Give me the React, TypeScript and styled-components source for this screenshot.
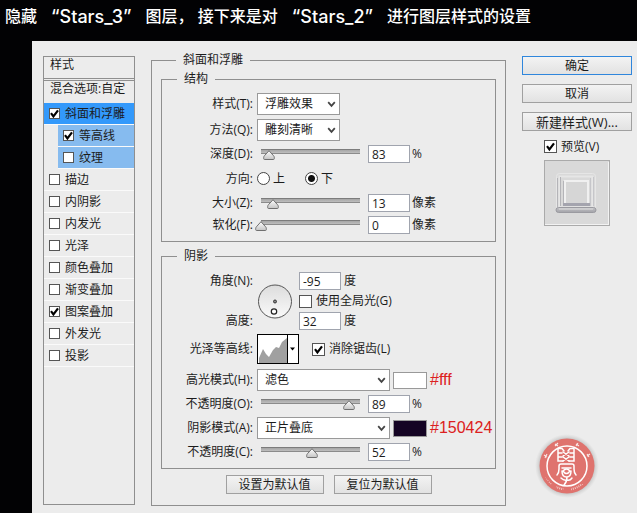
import React, { useId, useState } from "react";
import styled, { createGlobalStyle, css } from "styled-components";

const line = "#8f8f8f";
const face = "#ececec";

const svgUrl = (body: string, w: number, h: number) =>
  `url("data:image/svg+xml,${encodeURIComponent(
    `<svg xmlns='http://www.w3.org/2000/svg' width='${w}' height='${h}' viewBox='0 0 ${w} ${h}'>${body}</svg>`
  )}")`;

const tick = svgUrl(
  "<path d='M2 5.2 4.4 8.4 9 2.4' fill='none' stroke='#000' stroke-width='2.2'/>",
  11,
  11
);
const thumb = svgUrl(
  "<defs><linearGradient id='g' x2='0' y2='1'><stop stop-color='#fff'/><stop offset='1' stop-color='#c4c4c4'/></linearGradient></defs><path d='M6 .7 10.6 5.8Q11.3 6.6 11.3 7.4V8.6Q11.3 9.5 10.4 9.5H1.6Q.7 9.5 .7 8.6V7.4Q.7 6.6 1.4 5.8Z' fill='url(#g)' stroke='#707070'/>",
  12,
  10
);

const GlobalStyle = createGlobalStyle`
  *, *::before, *::after { box-sizing: border-box; }
  body {
    margin: 0;
    background: #020204;
    color: #1c1c1c;
    font: 12px/16px "Open Sans", "Noto Sans CJK SC", sans-serif;
  }
  input, select, button { font: inherit; color: inherit; margin: 0; }
`;

const Page = styled.div`
  display: flex;
  flex-direction: column;
  min-height: 100vh;
`;

const Title = styled.h1`
  display: flex;
  gap: 14px;
  margin: 0;
  padding: 4px 5px 12px;
  color: #fff;
  font: 500 16px/25px "Inter", "Noto Sans CJK SC", sans-serif;
  white-space: nowrap;
`;

const LayerName = styled.span`
  font-size: 18px;
`;

const Dialog = styled.form`
  flex: 1;
  display: grid;
  grid-template-columns: 92px minmax(0, 1fr) 110px;
  gap: 16px;
  margin-left: 32px;
  padding: 11px 5px 7px 11px;
  background: ${face};
`;

const StyleList = styled.nav`
  margin: 4px 0 1px;
  border: 1px solid ${line};
`;

const ListHead = styled.div`
  height: 22px;
  padding: 0 6px;
  border-bottom: 1px solid ${line};
  line-height: 15px;
`;

const ListBlend = styled.div`
  height: 23px;
  margin-top: 1px;
  padding: 0 6px;
  border-top: 1px solid ${line};
  line-height: 16px;
  white-space: nowrap;
`;

const ListItem = styled.label<{ $tone?: "active" | "child" }>`
  display: flex;
  align-items: center;
  gap: 5px;
  height: 22px;
  padding-left: 5px;
  border-bottom: 1px solid #fafafa;
  ${(p) => p.$tone === "active" && css`background: #3399fb;`}
  ${(p) =>
    p.$tone === "child" &&
    css`
      margin-left: 14px;
      background: #86bbef;
    `}
`;

const Tick = styled.input<{ $small?: boolean }>`
  appearance: none;
  flex: none;
  width: ${(p) => (p.$small ? 11 : 13)}px;
  height: ${(p) => (p.$small ? 11 : 13)}px;
  border: 1px solid #555;
  background: #fff center / 11px 11px no-repeat;
  &:checked { background-image: ${tick}; }
`;

const Group = styled.fieldset`
  min-width: 0;
  margin: 0;
  padding: 4px 0 5px;
  border: 1px solid ${line};
  & + & {
    margin-top: 6px;
    padding-top: 7px;
  }
`;

const Effect = styled(Group)`
  padding: 3px 9px 9px;
`;

const Legend = styled.legend`
  margin-left: 15px;
  padding: 0 7px;
  line-height: 16px;
`;

const Row = styled.div<{ $h: number }>`
  display: grid;
  grid-template-columns: 91px minmax(0, 1fr);
  column-gap: 4px;
  align-items: center;
  height: ${(p) => p.$h}px;
`;

const Caption = styled.label`
  text-align: right;
  white-space: nowrap;
`;

const Controls = styled.div<{ $gap?: number }>`
  display: flex;
  align-items: center;
  gap: ${(p) => p.$gap ?? 3}px;
  white-space: nowrap;
`;

const SelectBox = styled.span<{ $w: number }>`
  display: grid;
  align-items: center;
  width: ${(p) => p.$w}px;
  & > * { grid-area: 1 / 1; }
  & > svg {
    justify-self: end;
    margin-right: 4px;
    pointer-events: none;
  }
`;

const Select = styled.select`
  appearance: none;
  width: 100%;
  height: 22px;
  padding: 0 18px 0 7px;
  border: 1px solid #999;
  border-radius: 0;
  background: #fff;
`;

const NumberBox = styled.input`
  width: 42px;
  height: 18px;
  padding: 0 3px;
  border: 1px solid #a0a4ae;
  background: #fff;
`;

const Slider = styled.input`
  appearance: none;
  width: 111px;
  height: 12px;
  margin-left: -2px;
  background: linear-gradient(#7c7c7c 0 1px, #a5a5a5 1px, #bebebe 4px, #8b8b8b 4px)
    center 1px / calc(100% - 12px) 5px no-repeat;
  &::-webkit-slider-thumb {
    appearance: none;
    width: 12px;
    height: 10px;
    margin-top: 2px;
    background: ${thumb};
  }
`;

const Radio = styled.input`
  appearance: none;
  width: 13px;
  height: 13px;
  border: 1px solid #444;
  border-radius: 50%;
  background: #fff;
  &:checked { background: radial-gradient(circle, #111 0 3px, #fff 4px); }
`;

const Choice = styled.label<{ $gap?: number }>`
  display: flex;
  align-items: center;
  gap: ${(p) => p.$gap ?? 4}px;
  white-space: nowrap;
`;

const RadioSet = styled.div`
  display: flex;
  gap: 20px;
`;

const AngleGrid = styled.div`
  display: grid;
  grid-template-columns: 91px 35px minmax(0, 1fr);
  grid-template-rows: repeat(3, 20px);
  column-gap: 4px;
  align-items: center;
  & > svg { grid-area: 1 / 2 / 4 / 3; }
  & > ${Caption} { grid-column: 1; }
  & > ${Controls} { grid-column: 3; padding-left: 3px; }
`;

const ContourButton = styled.button`
  display: flex;
  width: 42px;
  height: 30px;
  padding: 0;
  border: 1px solid #000;
  background: #fff;
`;

const Swatch = styled.button<{ $color: string }>`
  width: 34px;
  height: 17px;
  padding: 0;
  border: 1px solid #999;
  background: ${(p) => p.$color};
`;

const Hex = styled.span`
  color: #dc2020;
  font: 16px/20px "Liberation Sans", sans-serif;
`;

const Defaults = styled.div`
  display: flex;
  justify-content: center;
  gap: 10px;
  margin-top: 6px;
`;

const PushButton = styled.button<{ $primary?: boolean; $w?: number }>`
  width: ${(p) => (p.$w ? `${p.$w}px` : "100%")};
  height: 19px;
  padding: 0;
  border: 1px solid ${(p) => (p.$primary ? "#2f86dc" : "#a0a0a0")};
  background: linear-gradient(#f3f3f3, #e2e2e2);
  line-height: 16px;
  white-space: nowrap;
`;

const WideTextButton = styled(PushButton)`
  font-size: 13px;
`;

const Actions = styled.div`
  display: flex;
  flex-direction: column;
  align-items: center;
  gap: 9px;
  margin-top: 4px;
`;

const PreviewGroup = styled.div`
  display: grid;
  gap: 7px;
  line-height: 13px;
`;

const Seal = styled.svg`
  margin: auto 20px 8px 0;
`;

function Chevron() {
  return (
    <svg width="9" height="7" viewBox="0 0 9 7" aria-hidden="true">
      <path d="M1.2 1.2 4.5 4.8 7.8 1.2" fill="none" stroke="#444" strokeWidth="1.8" />
    </svg>
  );
}

function SelectRow(p: { label: string; value: string; w: number; color?: string; note?: string }) {
  const id = useId();
  return (
    <Row $h={26}>
      <Caption htmlFor={id}>{p.label}</Caption>
      <Controls>
        <SelectBox $w={p.w}>
          <Select id={id} defaultValue={p.value}>
            <option>{p.value}</option>
          </Select>
          <Chevron />
        </SelectBox>
        {p.color && <Swatch type="button" $color={p.color} aria-label={p.note} />}
        {p.note && <Hex>{p.note}</Hex>}
      </Controls>
    </Row>
  );
}

function SliderRow(p: { label: string; value: number; max: number; unit: string }) {
  const id = useId();
  const [value, setValue] = useState(p.value);
  const change = (e: React.ChangeEvent<HTMLInputElement>) => setValue(Number(e.target.value) || 0);
  return (
    <Row $h={22}>
      <Caption htmlFor={id}>{p.label}</Caption>
      <Controls $gap={2}>
        <Slider type="range" min={0} max={p.max} value={value} onChange={change} aria-label={p.label} />
        <NumberBox id={id} value={value} onChange={change} />
        <span>{p.unit}</span>
      </Controls>
    </Row>
  );
}

const effects: { name: string; on?: boolean; tone?: "active" | "child" }[] = [
  { name: "斜面和浮雕", on: true, tone: "active" },
  { name: "等高线", on: true, tone: "child" },
  { name: "纹理", tone: "child" },
  { name: "描边" },
  { name: "内阴影" },
  { name: "内发光" },
  { name: "光泽" },
  { name: "颜色叠加" },
  { name: "渐变叠加" },
  { name: "图案叠加", on: true },
  { name: "外发光" },
  { name: "投影" },
];

function Dial() {
  return (
    <svg width="35" height="35" viewBox="0 0 35 35" aria-hidden="true">
      <defs>
        <linearGradient id="dial" x2="0" y2="1">
          <stop stopColor="#dcdcdc" />
          <stop offset="1" stopColor="#fafafa" />
        </linearGradient>
      </defs>
      <circle cx="18" cy="17.5" r="16.5" fill="url(#dial)" stroke="#555" />
      <circle cx="18" cy="17.5" r="1.5" fill="#888" stroke="#333" />
      <circle cx="17" cy="27.5" r="2.7" fill="#fff" stroke="#222" strokeWidth="1.2" />
    </svg>
  );
}

function Preview() {
  return (
    <svg width="66" height="66" viewBox="0 0 66 66" role="img" aria-label="预览">
      <defs>
        <linearGradient id="base" x2="0" y2="1">
          <stop stopColor="#c4c4c8" />
          <stop offset="1" stopColor="#a2a2a8" />
        </linearGradient>
      </defs>
      <rect x=".5" y=".5" width="65" height="65" fill="#d9d9d9" stroke="#aaa" />
      <path d="M1 64.5H65M64.5 2V65" stroke="#f2f2f2" fill="none" />
      <g fill="none">
        <rect x="12.500" y="13.500" width="39" height="38" rx="3" stroke="#e6e6e6" />
        <rect x="15.500" y="16.500" width="33" height="31" stroke="#e6e6e6" strokeWidth="2" />
        <path d="M13.500 18V47M16.500 17V46M19.500 21V44" stroke="#b4b4b8" />
        <path d="M46.500 18V46M49.500 17V46" stroke="#c6c6ca" />
        <rect x="21" y="21" width="23" height="23" fill="#d6d6d6" stroke="#f0f0f0" strokeWidth="2" />
        <path d="M19 44.500H46" stroke="#a4a4ae" strokeWidth="3" />
        <rect x="12" y="47.500" width="40" height="5" rx="2.500" fill="url(#base)" stroke="#9a9aa0" />
        <path d="M15 49H49" stroke="#dedede" />
      </g>
    </svg>
  );
}

function SealMark() {
  return (
    <Seal width="64" height="64" viewBox="-32 -32 64 64" role="img" aria-label="印章">
      <defs>
        <radialGradient id="halo">
          <stop offset=".8" stopColor="#999" stopOpacity=".65" />
          <stop offset="1" stopColor="#bbb" stopOpacity="0" />
        </radialGradient>
      </defs>
      <circle r="32" fill="url(#halo)" />
      <circle r="27.5" fill="#df736e" />
      <g fill="none" stroke="#fff">
        <circle r="20" strokeWidth="1.5" />
        <g strokeWidth="1.5" strokeLinecap="round">
          <path d="M-9-17.500V-5H-4M7-17.500V-5H2M-9-17.500H-5L-3-15M7-17.500H3L1-15M-9-13H-5M7-13H3M-9-9H-5M7-9H3" />
          <path d="M-4-14 2-10M2-14-4-10M-4-9 2-5M2-9-4-5" />
          <path d="M-10 9Q-8 7-8 3V0Q-8-2-6-2H5Q7-2 7 0V3Q7 7 9 9M-5 2H4" />
          <path d="M-5 5Q-5 11-.5 11T4 5M-4 5Q-.5 1 3 5Q-.5 10-4 5M0 11Q0 16-3 19M-6 12Q-3 15 0 14Q3 15 5 12" />
        </g>
        <g strokeWidth="1.1" strokeOpacity=".85">
          <path d="M-23-11-20-9M-22-8-20-12M-12-22-9-20M-12-20-9-23M9-22 12-20M9-20 11-23M20-10 23-12M20-12 22-9" />
          <circle r="23.5" strokeWidth="2" strokeDasharray="1 1" pathLength="148" strokeOpacity=".6" clipPath="url(#sealText)" />
        </g>
      </g>
      <clipPath id="sealText">
        <path d="M5 18H18L24 8 30 16 10 30H3ZM-24 9-28 14-21 23-15 18ZM-10 19-13 26-5 28-3 21Z" />
      </clipPath>
    </Seal>
  );
}

export default function App() {
  return (
    <Page>
      <GlobalStyle />
      <Title>
        <span>隐藏</span>
        <LayerName>“Stars_3”</LayerName>
        <span>图层， 接下来是对</span>
        <LayerName>“Stars_2”</LayerName>
        <span>进行图层样式的设置</span>
      </Title>
      <Dialog onSubmit={(e) => e.preventDefault()}>
        <StyleList>
          <ListHead>样式</ListHead>
          <ListBlend>混合选项:自定</ListBlend>
          {effects.map((e) => (
            <ListItem key={e.name} $tone={e.tone}>
              <Tick type="checkbox" $small defaultChecked={e.on} />
              {e.name}
            </ListItem>
          ))}
        </StyleList>

        <Effect>
          <Legend>斜面和浮雕</Legend>
          <Group>
            <Legend>结构</Legend>
            <SelectRow label="样式(T):" value="浮雕效果" w={83} />
            <SelectRow label="方法(Q):" value="雕刻清晰" w={83} />
            <SliderRow label="深度(D):" value={83} max={1000} unit="%" />
            <Row $h={27}>
              <Caption as="span">方向:</Caption>
              <RadioSet role="radiogroup" aria-label="方向">
                <Choice $gap={3}>
                  <Radio type="radio" name="direction" />上
                </Choice>
                <Choice $gap={3}>
                  <Radio type="radio" name="direction" defaultChecked />下
                </Choice>
              </RadioSet>
            </Row>
            <SliderRow label="大小(Z):" value={13} max={110} unit="像素" />
            <SliderRow label="软化(F):" value={0} max={16} unit="像素" />
          </Group>

          <Group>
            <Legend>阴影</Legend>
            <AngleGrid>
              <Caption htmlFor="angle">角度(N):</Caption>
              <Controls>
                <NumberBox id="angle" defaultValue="-95" />
                <span>度</span>
              </Controls>
              <Dial />
              <Controls>
                <Choice>
                  <Tick type="checkbox" />
                  使用全局光(G)
                </Choice>
              </Controls>
              <Caption htmlFor="altitude">高度:</Caption>
              <Controls>
                <NumberBox id="altitude" defaultValue="32" />
                <span>度</span>
              </Controls>
            </AngleGrid>
            <Row $h={36}>
              <Caption htmlFor="contour">光泽等高线:</Caption>
              <Controls $gap={13}>
                <ContourButton id="contour" type="button">
                  <svg width="40" height="28" viewBox="0 0 40 28" aria-hidden="true">
                    <path d="M1 28V23L5 14 8 19 11 22 15 15 18 12 21 13 24 7 29 3V28Z" fill="#a0a0a0" />
                    <path d="M29.5 0V28" stroke="#000" />
                    <path d="M32 12.500H37L34.500 15.500Z" fill="#000" />
                  </svg>
                </ContourButton>
                <Choice>
                  <Tick type="checkbox" defaultChecked />
                  消除锯齿(L)
                </Choice>
              </Controls>
            </Row>
            <SelectRow label="高光模式(H):" value="滤色" w={133} color="#ffffff" note="#fff" />
            <SliderRow label="不透明度(O):" value={89} max={100} unit="%" />
            <SelectRow label="阴影模式(A):" value="正片叠底" w={133} color="#150424" note="#150424" />
            <SliderRow label="不透明度(C):" value={52} max={100} unit="%" />
          </Group>

          <Defaults>
            <PushButton type="button" $w={98}>设置为默认值</PushButton>
            <PushButton type="button" $w={98}>复位为默认值</PushButton>
          </Defaults>
        </Effect>

        <Actions>
          <PushButton type="submit" $primary>确定</PushButton>
          <PushButton type="button">取消</PushButton>
          <WideTextButton type="button">新建样式(W)...</WideTextButton>
          <PreviewGroup>
            <Choice>
              <Tick type="checkbox" defaultChecked />
              预览(V)
            </Choice>
            <Preview />
          </PreviewGroup>
          <SealMark />
        </Actions>
      </Dialog>
    </Page>
  );
}
